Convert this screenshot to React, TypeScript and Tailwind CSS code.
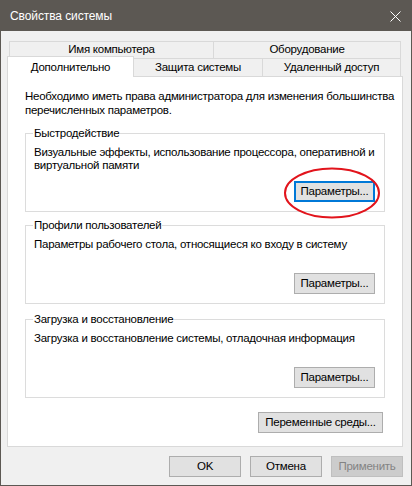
import React from "react";

const font = "font-['Liberation_Sans','Noto_Sans',sans-serif]";

function Btn({
  children,
  className = "",
  focused = false,
  disabled = false,
}: {
  children: React.ReactNode;
  className?: string;
  focused?: boolean;
  disabled?: boolean;
}): React.JSX.Element {
  const border = focused
    ? "border-2 border-[#0078d7]"
    : disabled
      ? "border border-[#bfbfbf]"
      : "border border-[#adadad]";
  return (
    <button
      className={`flex h-[21px] items-center justify-center leading-none whitespace-nowrap ${border} ${
        disabled ? "bg-[#cccccc] text-[#838383]" : "bg-[#e1e1e1] text-black"
      } ${className}`}
    >
      {children}
    </button>
  );
}

function Group({
  title,
  text,
  focused = false,
  className = "",
}: {
  title: string;
  text: React.ReactNode;
  focused?: boolean;
  className?: string;
}): React.JSX.Element {
  return (
    <div className={`flex h-[79px] flex-col border border-[#dcdcdc] ${className}`}>
      <span className="-mt-[8px] ml-[7px] w-fit bg-white px-px leading-[15px]">{title}</span>
      <p className="mt-[5px] ml-[8px] leading-[13px] whitespace-nowrap">{text}</p>
      <div className="mt-auto mb-[9px] flex justify-end pr-[9px]">
        <Btn focused={focused} className="w-[81px]">
          Параметры...
        </Btn>
      </div>
    </div>
  );
}

export default function App(): React.JSX.Element {
  return (
    <div
      className={`relative flex h-[486px] w-[412px] flex-col border border-[#5c5853] bg-[#f0f0f0] text-[11.5px] tracking-[-0.25px] text-black ${font}`}
    >
      {/* Title bar */}
      <div className="flex h-[30px] items-center justify-between bg-[#5c5853] pr-[9px] pl-[9px] text-white">
        <span className="text-[12px] tracking-[-0.1px]">Свойства системы</span>
        <svg width="11" height="11" viewBox="0 0 11 11" className="mr-[1px]">
          <path d="M0.5 0.5 L10.5 10.5 M10.5 0.5 L0.5 10.5" stroke="#ffffff" strokeWidth="1" />
        </svg>
      </div>

      <div className="flex flex-col pt-[10px] pl-[6px]">
        {/* Tabs */}
        <div className="ml-[2px] flex h-[17px] w-[392px]">
          <div className="flex w-[204px] items-center justify-center border-t border-l border-[#d9d9d9]">
            Имя компьютера
          </div>
          <div className="flex flex-1 items-center justify-center border-x border-t border-[#d9d9d9]">
            Оборудование
          </div>
        </div>
        <div className="flex h-[18px] w-[394px] items-start">
          <div className="relative z-10 -mt-[2px] flex h-[21px] w-[127px] items-start justify-center border-x border-t border-[#d9d9d9] bg-white pt-[2px]">
            Дополнительно
          </div>
          <div className="flex h-[18px] w-[129px] items-center justify-center border-t border-r border-[#d9d9d9]">
            Защита системы
          </div>
          <div className="flex h-[18px] flex-1 items-center justify-center border-t border-r border-[#d9d9d9]">
            Удаленный доступ
          </div>
        </div>

        {/* Panel */}
        <div className="flex h-[371px] w-[396px] flex-col border border-[#d9d9d9] bg-white pt-[12px] pr-[17px] pl-[17px]">
          <p className="leading-[14px] whitespace-nowrap">
            Необходимо иметь права администратора для изменения большинства
            <br />
            перечисленных параметров.
          </p>
          <Group
            className="mt-[16px]"
            title="Быстродействие"
            focused
            text={
              <>
                Визуальные эффекты, использование процессора, оперативной и
                <br />
                виртуальной памяти
              </>
            }
          />
          <Group
            className="mt-[13px]"
            title="Профили пользователей"
            text="Параметры рабочего стола, относящиеся ко входу в систему"
          />
          <Group
            className="mt-[15px]"
            title="Загрузка и восстановление"
            text="Загрузка и восстановление системы, отладочная информация"
          />
          <div className="mt-[14px] flex justify-end pr-[2px]">
            <Btn className="w-[125px]">Переменные среды...</Btn>
          </div>
        </div>

        {/* Dialog buttons */}
        <div className="mt-[9px] flex w-[396px] justify-end gap-[9px]">
          <Btn className="w-[72px]">OK</Btn>
          <Btn className="w-[72px]">Отмена</Btn>
          <Btn className="w-[72px]" disabled>
            Применить
          </Btn>
        </div>
      </div>

      {/* Red annotation ellipse */}
      <svg
        className="pointer-events-none absolute top-[166px] left-[282px]"
        width="98"
        height="52"
        viewBox="0 0 98 52"
      >
        <ellipse cx="49" cy="26" rx="47" ry="24.5" fill="none" stroke="#e2141c" strokeWidth="2" />
      </svg>
    </div>
  );
}
